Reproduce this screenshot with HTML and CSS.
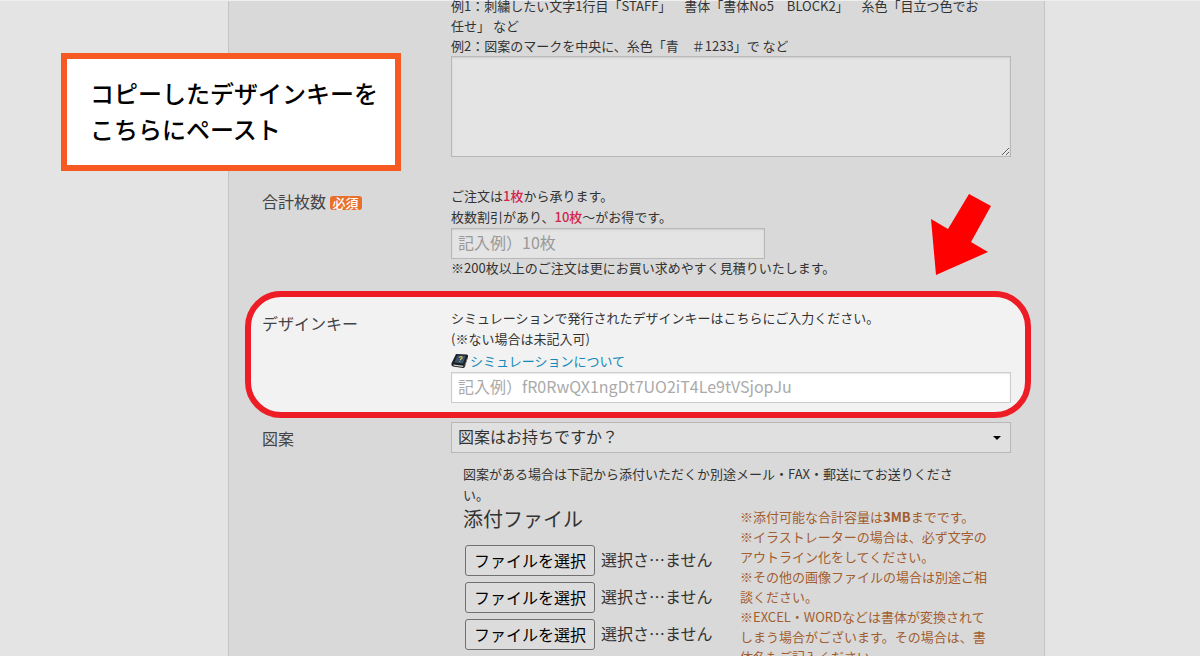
FILE: index.html
```html
<!DOCTYPE html>
<html lang="ja">
<head>
<meta charset="utf-8">
<title>ご注文フォーム</title>
<link rel="stylesheet" href="styles.css">
</head>
<body>
<div class="page">
  <form class="panel">
    <div class="row row-first">
      <div class="label"></div>
      <div class="field">
        <p class="examples" id="request-help">例1：刺繍したい文字1行目「STAFF」　書体「書体No5　BLOCK2」　糸色「目立つ色でお<br>任せ」 など<br>例2：図案のマークを中央に、糸色「青　＃1233」で など</p>
        <textarea class="box area" aria-labelledby="request-help"></textarea>
      </div>
    </div>

    <div class="row row-count">
      <div class="label"><label for="count">合計枚数</label> <span class="badge">必須</span></div>
      <div class="field">
        <p class="intro">ご注文は<em>1枚</em>から承ります。<br>枚数割引があり、<em>10枚</em>～がお得です。</p>
        <input class="box count" id="count" type="text" placeholder="記入例）10枚">
        <p class="after">※200枚以上のご注文は更にお買い求めやすく見積りいたします。</p>
      </div>
    </div>

    <div class="row highlight">
      <div class="label"><label for="key">デザインキー</label></div>
      <div class="field">
        <p>シミュレーションで発行されたデザインキーはこちらにご入力ください。<br>(※ない場合は未記入可)</p>
        <a class="help" href="#">
          <svg class="book" viewBox="0 0 18 16" aria-hidden="true">
            <path d="M5 1 L16 1.4 Q17.4 1.8 17 4 L14 13.6 Q13.4 15.2 12 15 L2 13.6 Q0 13 .4 10.6 Z" fill="#1b1f24"/>
            <path d="M2 11.4 L12.4 12.8 L12 14 L3 12.8 Z" fill="#d8d8d4"/>
            <path d="M13.6 12 L16.6 3.6 L16.4 6 L13.8 13.6 Z" fill="#999"/>
            <path d="M6.4 2.4 L14.8 2.8 L12 10.6 L3.4 9.6 Z" fill="#39536b"/>
            <path d="M8.2 4.6 Q10 3 11.2 4.2 Q11.6 5.4 9.6 6.4 L9.2 7.2 M8.8 8.4 L8.6 9" fill="none" stroke="#d8c25a" stroke-width="1.2"/>
          </svg>シミュレーションについて</a>
        <input class="box" id="key" type="text" placeholder="記入例）fR0RwQX1ngDt7UO2iT4Le9tVSjopJu">
      </div>
    </div>

    <div class="row row-design">
      <div class="label"><label for="design">図案</label></div>
      <div class="field">
        <div class="select">
          <select class="box" id="design"><option>図案はお持ちですか？</option></select>
          <svg class="caret" viewBox="0 0 8 4" aria-hidden="true"><path d="M0 0h8L4 4z"/></svg>
        </div>
        <div class="upload">
          <p class="intro">図案がある場合は下記から添付いただくか別途メール・FAX・郵送にてお送りくださ<br>い。</p>
          <div class="columns">
            <div>
              <h2>添付ファイル</h2>
              <ul class="files">
                <li><button type="button">ファイルを選択</button><span>選択さ…ません</span></li>
                <li><button type="button">ファイルを選択</button><span>選択さ…ません</span></li>
                <li><button type="button">ファイルを選択</button><span>選択さ…ません</span></li>
              </ul>
            </div>
            <p class="notes">※添付可能な合計容量は<strong>3MB</strong>までです。<br>※イラストレーターの場合は、必ず文字の<br>アウトライン化をしてください。<br>※その他の画像ファイルの場合は別途ご相<br>談ください。<br>※EXCEL・WORDなどは書体が変換されて<br>しまう場合がございます。その場合は、書<br>体名もご記入ください。</p>
          </div>
        </div>
      </div>
    </div>
  </form>

  <div class="callout">コピーしたデザインキーを<br>こちらにペースト</div>
  <svg class="arrow" viewBox="0 0 62 84" aria-hidden="true"><path d="M39 1 L61 13 L41 49 L58 59 L6 82 L1 26 L18 36 Z" fill="#f00"/></svg>
</div>
</body>
</html>
```

FILE: styles.css
```css
* { box-sizing: border-box; }

html { overflow: hidden; }

body {
  margin: 0;
  background: #e4e4e4;
  color: #333;
  font-family: "Noto Sans CJK JP", sans-serif;
  font-size: 13px;
  line-height: 21px;
  text-spacing-trim: space-all;
}

p, h2, ul { margin: 0; padding: 0; }

.page {
  position: relative;
  display: grid;
  grid-template-columns: 228fr 817fr 155fr;
  border-top: 1px solid #eee;
}

.panel {
  grid-column: 2;
  min-width: 0;
  padding: 0 33px;
  background: #d9d9d9;
  border: solid #c4c4c4;
  border-width: 0 1px;
}

.row {
  display: grid;
  grid-template-columns: 189px minmax(0, 1fr);
}

.row-first { margin-top: -5px; }
.row-count { margin-top: 28px; }
.row-design { margin-top: 4px; }

.label {
  padding-top: 4px;
  color: #444;
  font-size: 16px;
  line-height: 24px;
}

.badge {
  display: inline-block;
  padding: 0 3px;
  border-radius: 3px;
  background: #e8702a;
  color: #fff;
  font-size: 13px;
  font-weight: 500;
  line-height: 14px;
}

.examples { line-height: 20px; }
.intro { padding-bottom: 1px; }
.after { padding-bottom: 2px; line-height: 18px; }

em {
  color: #d2254c;
  font-style: normal;
  font-weight: 500;
}

.box {
  display: block;
  width: 100%;
  height: 31px;
  margin: 0;
  padding: 0 6px 3px;
  border: 1px solid #b8b8b8;
  border-radius: 0;
  background: #e4e4e4;
  box-shadow: inset 0 1px 2px #0000001a;
  color: #333;
  font: 16px "Noto Sans CJK JP", sans-serif;
}

.box::placeholder { color: #999; opacity: 1; }

.area { height: 101px; }
.count { width: 56%; }

.highlight {
  margin: 12px -20px 0 -17px;
  padding: 10px 14px 9px 11px;
  border: 6px solid #ee1c25;
  border-radius: 36px;
  background: #f2f2f2;
}

.highlight .box { background: #fff; border-color: #ccc; }
.highlight .box::placeholder { color: #aaa; }

.help {
  display: flex;
  align-items: center;
  gap: 1px;
  height: 23px;
  color: #148abb;
  text-decoration: none;
}

.book { width: 18px; height: 16px; }

.select { position: relative; }

.select .box {
  appearance: none;
  background: #e0e0e0;
  box-shadow: none;
}

.caret {
  position: absolute;
  right: 10px;
  top: 14px;
  width: 8px;
  height: 4px;
}

.upload { padding: 10px 12px 0; }

.columns {
  display: grid;
  grid-template-columns: 277px minmax(0, 1fr);
}

h2 {
  font-size: 20px;
  font-weight: 400;
  line-height: 26px;
}

.files {
  display: grid;
  gap: 6px;
  padding: 13px 2px 0;
  list-style: none;
}

.files li {
  display: flex;
  align-items: center;
  gap: 6px;
  font-size: 16px;
}

.files span { padding-bottom: 2px; }

button {
  height: 31px;
  padding: 0 8px 2px;
  border: 1px solid #707070;
  border-radius: 3px;
  background: #dcdcdc;
  color: #000;
  font: 16px "Noto Sans CJK JP", sans-serif;
}

.notes {
  padding-top: 1px;
  color: #a35d2f;
  line-height: 20px;
  white-space: nowrap;
}

.callout {
  position: absolute;
  left: 61px;
  top: 52px;
  padding: 16px 17px 18px 23px;
  border: 6px solid #f65a22;
  background: #fff;
  color: #000;
  font-size: 24px;
  font-weight: 500;
  line-height: 36px;
}

.arrow {
  position: absolute;
  left: 930px;
  top: 192px;
  width: 62px;
  height: 84px;
}
```
